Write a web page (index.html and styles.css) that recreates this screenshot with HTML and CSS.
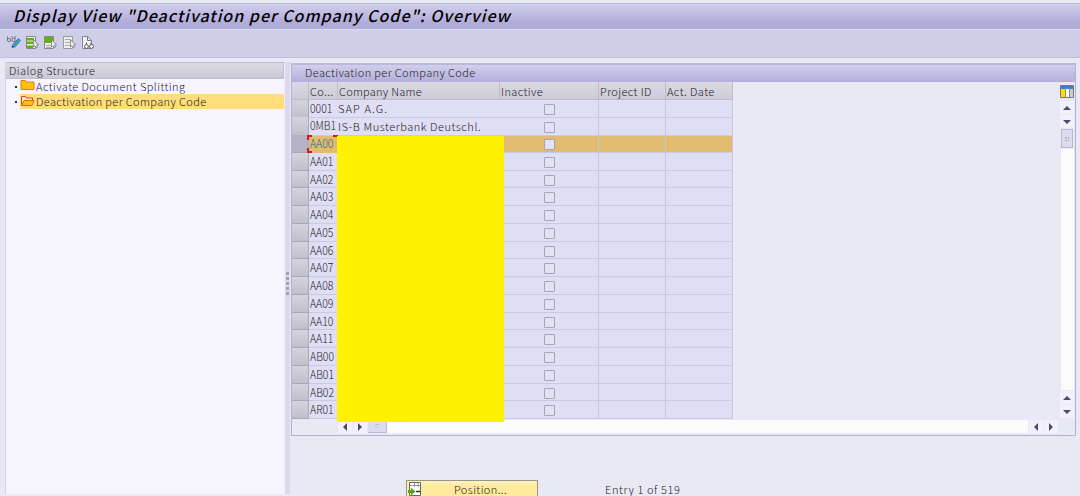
FILE: index.html
```html
<!DOCTYPE html>
<html lang="en">
<head>
  <meta charset="UTF-8" />
  <title>Display View</title>
  <link rel="stylesheet" href="styles.css">
</head>
<body>
  <h1 class="title">Display View "Deactivation per Company Code": Overview</h1>

  <!-- Toolbar -->
  <div class="toolbar">
    <svg width="15" height="15" viewBox="0 0 15 15" fill="none">
      <path d="M1.5 1.5v3M5.500 1l1 2M9 1v3" stroke="#777" />
      <circle cx="3" cy="5" r="1.700" stroke="#777" /><circle cx="7.500" cy="5" r="1.700" stroke="#777" />
      <path d="M6 11l2-3 4.500-4.500 2 2-4.500 5.500-2 1.500z" fill="#3d9cc5" stroke="#286f96" stroke-width=".7" /><path d="M5.500 13l.8-2.500 1.700 1.500z" fill="#345" />
    </svg>
    <svg width="15" height="15" viewBox="0 0 15 15">
      <path d="M1.500 1.500h9v12h-9z" fill="#eee" stroke="#888" />
      <path d="M2 3h7v2.500H2zM2 6.500h6V9H2zM2 10.500h6V13H2z" fill="#65b20c" />
      <path d="M8.500 4.500v7.500l1.500-1 1.500 2 1-1-1-2h2z" fill="#eee" stroke="#777" stroke-width=".8" />
    </svg>
    <svg width="15" height="15" viewBox="0 0 15 15">
      <path d="M1.500 1.500h9v12h-9z" fill="#eee" stroke="#888" />
      <path d="M2 2h8v6H2z" fill="#65b20c" /><path d="M3 10.500h5M3 12.500h5" stroke="#aaa" />
      <path d="M8.500 4.500v7.500l1.500-1 1.500 2 1-1-1-2h2z" fill="#eee" stroke="#777" stroke-width=".8" />
    </svg>
    <svg width="15" height="15" viewBox="0 0 15 15">
      <path d="M1.500 1.500h9v12h-9z" fill="#eee" stroke="#999" />
      <path d="M3 4.500h5M3 7.500h5M3 10.500h5" stroke="#aaa" />
      <path d="M8.500 4.500v7.500l1.500-1 1.500 2 1-1-1-2h2z" fill="#eee" stroke="#777" stroke-width=".8" />
    </svg>
    <svg width="15" height="15" viewBox="0 0 15 15">
      <path d="M1.500 13.500v-12h5l4 4v8z" fill="#f3f3f6" stroke="#888" /><path d="M6.500 1.500v4h4" fill="none" stroke="#777" />
      <path d="M5.500 7.500v3M10 7.500v3" stroke="#555" />
      <circle cx="5.500" cy="11.500" r="1.900" fill="#fff" stroke="#555" /><circle cx="10.500" cy="11.500" r="1.900" fill="#fff" stroke="#555" />
    </svg>
  </div>

  <div class="work">
    <!-- Dialog tree -->
    <div class="tree">
      <div class="tree-head">Dialog Structure</div>
      <div class="node">
        <i class="dot"></i>
        <div class="node-label">
          <svg width="15" height="12" viewBox="0 0 15 12"><path d="M1 10.500V1.500h4.500l1 1.500H14v7.500z" fill="#ffc20a" stroke="#e37a16" /></svg>
          <span class="t-activate">Activate Document Splitting</span>
        </div>
      </div>
      <div class="node">
        <i class="dot"></i>
        <div class="node-label selected">
          <svg width="15" height="13" viewBox="0 0 15 13"><path d="M1.500 11.500v-9h4l1 1.500h6v2" fill="#fff0b0" stroke="#d9442a" /><path d="M1.500 11.500L4 6.500h10l-2 5z" fill="#ffc20a" stroke="#e0661c" /></svg>
          <span class="t-deact">Deactivation per Company Code</span>
        </div>
      </div>
    </div>

    <div class="splitter"><i></i><i></i><i></i><i></i><i></i></div>

    <!-- Table control -->
    <div class="content">
      <div class="panel">
        <div class="panel-head"><span class="t-deact">Deactivation per Company Code</span></div>
        <div class="panel-body">
          <div class="table-area">
            <div class="row head">
              <div></div><div>Co...</div><div class="h-name">Company Name</div><div>Inactive</div><div>Project ID</div><div>Act. Date</div>
            </div>
            <div class="rows" id="rows"></div>
            <div class="hscroll">
              <div class="btn left"></div><div class="btn right"></div>
              <div class="hthumb">::</div>
              <div class="htrack"></div>
              <div class="btn left"></div><div class="btn right"></div>
            </div>
            <div class="mask"></div>
          </div>
          <div class="vscroll">
            <svg width="16" height="16" viewBox="0 0 16 16">
              <path d="M1.500 1.500h13v12h-13z" fill="#fff" stroke="#777" />
              <path d="M2 2h12v3H2z" fill="#2789c4" /><path d="M2 5h4v8H2z" fill="#ffdf00" />
              <path d="M10 5h4v8h-4z" fill="#ccc" /><path d="M6.500 3v10M10.500 3v10" stroke="#888" />
            </svg>
            <div class="btn up"></div><div class="btn down"></div>
            <div class="vthumb"><i></i></div>
            <div class="vtrack"></div>
            <div class="btn up"></div><div class="btn down"></div>
          </div>
        </div>
      </div>
      <div class="footer">
        <div class="position">
          <svg width="14" height="15" viewBox="0 0 14 15">
            <path d="M1.500 1.500h11v13h-11z" fill="#fff" stroke="#666" /><path d="M2 4.500h10M6.500 2v4M10 2v4" stroke="#999" />
            <path d="M8 10.500h4" stroke="#333" stroke-width="1.500" />
            <path d="M0 9h3V6.500l4.500 4-4.500 4V12H0z" fill="#58a51c" />
          </svg>
          <span>Position...</span>
        </div>
        <div class="entry">Entry 1 of 519</div>
      </div>
    </div>
  </div>

  <script>
    const codes = ['0001', '0MB1', 'AA00', 'AA01', 'AA02', 'AA03', 'AA04', 'AA05', 'AA06',
      'AA07', 'AA08', 'AA09', 'AA10', 'AA11', 'AB00', 'AB01', 'AB02', 'AR01'];
    const names = ['SAP A.G.', 'IS-B Musterbank Deutschl.'];
    let html = '';
    codes.forEach(function (code, i) {
      html += '<div class="row' + (i === 2 ? ' current' : '') + '"><div></div>' +
        '<div class="code"><span>' + code + '</span></div>' +
        '<div class="name name' + i + '">' + (names[i] || '') + '</div>' +
        '<div class="check"><i></i></div><div></div><div></div></div>';
    });
    document.getElementById('rows').innerHTML = html;
  </script>
</body>
</html>
```

FILE: styles.css
```css
* {
  box-sizing: border-box;
}

body {
  margin: 0;
  width: 1080px;
  height: 496px;
  overflow: hidden;
  display: flex;
  flex-direction: column;
  padding-top: 3px;
  background: #e9e9f5;
  color: #1c1c22;
  font-family: "Noto Sans CJK JP", sans-serif;
  font-weight: 300;
  font-size: 11px;
  line-height: 15px;
  white-space: nowrap;
}

svg {
  display: block;
  flex: none;
}

.title {
  flex: none;
  margin: 0;
  height: 26px;
  padding-left: 13px;
  border-top: 1px solid #bdbbdc;
  background: linear-gradient(#d2cfeb, #b1abda 75%);
  color: #000;
  font-size: 16px;
  font-style: italic;
  font-weight: 500;
  line-height: 22px;
  letter-spacing: 1.03px;
}

.toolbar {
  flex: none;
  height: 29px;
  display: flex;
  gap: 3.7px;
  padding: 5px 0 0 6px;
  border-top: 1px solid #dddbf0;
  border-bottom: 1px solid #bfbedb;
  background: #cfcee9;
}

.work {
  flex: 1;
  display: flex;
  padding: 4px 0 0 5px;
}

.tree {
  width: 279px;
  height: 432px;
  border-left: 1px solid #d2d1e5;
  background: #f6f5fe;
}

.tree-head {
  height: 17px;
  padding-left: 3px;
  border: 1px solid #c0bfcf;
  border-left: 0;
  background: linear-gradient(#dcdae5, #cbc9d8);
  letter-spacing: 0.4px;
  line-height: 15px;
}

.node {
  height: 15px;
  display: flex;
  align-items: center;
  padding-left: 9px;
}

.dot {
  width: 2px;
  height: 2px;
  margin-right: 3px;
  background: #333;
}

.node-label {
  flex: 1;
  height: 15px;
  display: flex;
  gap: 1px;
}

.selected {
  background: #ffdc7c;
}

.t-deact {
  letter-spacing: 0.38px;
}

.t-activate {
  letter-spacing: 0.43px;
}

.splitter {
  width: 7px;
  height: 432px;
  display: flex;
  flex-direction: column;
  justify-content: center;
  align-items: center;
  gap: 2px;
  padding-top: 10px;
  border-left: 1px solid #f1f0fa;
  border-right: 1px solid #e9e9f5;
  background: #dad9ed;
}

.splitter i {
  width: 3px;
  height: 3px;
  background: #a3a2af;
}

.content {
  width: 785px;
  padding-top: 1px;
}

.panel {
  height: 373px;
  border: 1px solid #b3b0d6;
  border-top: 2px solid #bcb8dd;
}

.panel-head {
  height: 17px;
  padding-left: 13px;
  background: linear-gradient(#d2cfeb, #b2addb);
  line-height: 14px;
}

.panel-body {
  display: flex;
  justify-content: space-between;
}

.table-area {
  width: 766px;
  position: relative;
}

.row {
  width: 441px;
  display: grid;
  grid-template-columns: 17px 29px 162px 99px 67px 67px;
  background: #e0def4;
}

.row > div {
  min-width: 0;
  padding-left: 1px;
  border-right: 1px solid #c8c6da;
  border-bottom: 1px solid #cbc9df;
}

.row > div:first-child {
  border-color: #a9a8b6;
  background: linear-gradient(#d4d3de, #c0bfcc);
}

.head > div,
.head > div:first-child {
  height: 18px;
  background: linear-gradient(#dbd9e3, #cdcbd8);
  border-color: #bdbbc9;
  letter-spacing: 0.4px;
  line-height: 19px;
}

.head .h-name {
  letter-spacing: 0.25px;
}

/* 319px for 18 rows */
.rows .row {
  height: 18px;
  line-height: 17px;
}

.rows .row:nth-child(4n + 1) {
  height: 17px;
}

.rows .row > div {
  height: 100%;
}

.rows .row .code,
.rows .row .name {
  border-right: 0;
}

.rows .row .name {
  padding-left: 0;
}

.name0 {
  letter-spacing: 1.1px;
}

.name1 {
  padding-top: 1px;
  letter-spacing: 0.55px;
}

.code span {
  display: block;
  width: 26px;
  font-size: 12px;
  line-height: 16px;
  transform: scaleX(0.87);
  transform-origin: left;
}

.check {
  display: flex;
  justify-content: center;
  align-items: center;
}

.rows .row .check {
  padding-top: 2px;
}

.check i {
  width: 11px;
  height: 11px;
  border: 1px solid #a5a4b2;
  border-radius: 1px;
  background: #e3e1f4;
}

.row.current {
  background: #e1bb72;
}

.row.current > div:first-child {
  background: #b4b2c4;
}

.rows .current .code {
  margin-left: -2px;
  padding-left: 3px;
  border-bottom: 0;
  color: #156b86;
  background:
    linear-gradient(#d01c1c, #d01c1c) 0 0 / 5px 2px no-repeat,
    linear-gradient(#d01c1c, #d01c1c) 0 0 / 2px 5px no-repeat,
    linear-gradient(#d01c1c, #d01c1c) 100% 0 / 5px 2px no-repeat,
    linear-gradient(#d01c1c, #d01c1c) 0 100% / 5px 2px no-repeat,
    linear-gradient(#d01c1c, #d01c1c) 0 100% / 2px 5px no-repeat;
}

/* covers the company names below the first two rows */
.mask {
  position: absolute;
  left: 45px;
  top: 54px;
  width: 167px;
  height: 286px;
  background: #fff200;
}

.hscroll {
  display: flex;
  gap: 1px;
  padding: 1px 0 0 46px;
}

.btn {
  flex: none;
  width: 14px;
  height: 13px;
  display: flex;
  justify-content: center;
  align-items: center;
  background: #f2f1fb;
}

.btn::before {
  content: "";
  border: 4px solid transparent;
}

.left::before {
  border-left: 0;
  border-right-color: #4c4869;
}

.right::before {
  border-right: 0;
  border-left-color: #4c4869;
}

.up::before {
  border-top: 0;
  border-bottom-color: #4c4869;
}

.down::before {
  border-bottom: 0;
  border-top-color: #4c4869;
}

.hthumb {
  width: 19px;
  height: 13px;
  border-right: 1px solid #bbb9cf;
  border-bottom: 1px solid #bbb9cf;
  background: #dddbee;
  color: #888;
  font-size: 8px;
  line-height: 10px;
  text-align: center;
}

.htrack {
  flex: 1;
  margin-left: -1px;
  background: #fbfbfc;
}

.vscroll {
  width: 16px;
  height: 336px;
  display: flex;
  flex-direction: column;
  align-items: center;
  gap: 1px;
  padding-top: 2px;
}

.vthumb {
  width: 12px;
  height: 19px;
  padding: 7px 3px;
  border: 1px solid #bbb9cf;
  background: #dddbee;
}

.vthumb i {
  display: block;
  width: 4px;
  height: 4px;
  border: 1px dotted #aaa;
}

.vtrack {
  flex: 1;
  width: 13px;
  background: #fbfbfc;
}

.footer {
  display: flex;
  padding: 44px 0 0 115px;
}

.position {
  width: 132px;
  height: 20px;
  display: flex;
  gap: 32px;
  padding-left: 1px;
  border: 1px solid #9a9686;
  background: linear-gradient(#fff3c0, #ffeb9c 30%);
  letter-spacing: 0.4px;
  line-height: 17px;
}

.entry {
  padding-left: 67px;
  line-height: 19px;
  letter-spacing: 0.6px;
}
```
